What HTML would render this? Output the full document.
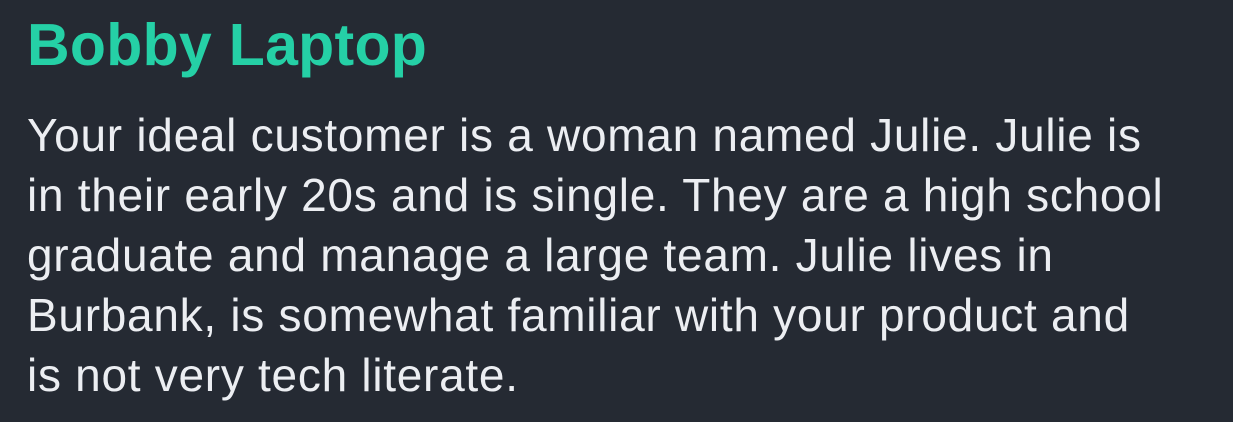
<!DOCTYPE html>
<html><head><style>
html,body{margin:0;padding:0;background:#252a33;width:1233px;height:422px;overflow:hidden}
h1{position:absolute;left:27px;top:15px;margin:0;font:bold 59px/60px "Liberation Sans",sans-serif;color:#25d0a6;letter-spacing:0.3px;white-space:nowrap}
p{position:absolute;left:27px;top:105px;margin:0;font:46px/60px "Liberation Sans",sans-serif;color:#eceef2;letter-spacing:0.72px;white-space:nowrap}
</style></head><body>
<h1>Bobby Laptop</h1>
<p>Your ideal customer is a woman named Julie. Julie is<br>in their early 20s and is single. They are a high school<br>graduate and manage a large team. Julie lives in<br>Burbank, is somewhat familiar with your product and<br>is not very tech literate.</p>
</body></html>
